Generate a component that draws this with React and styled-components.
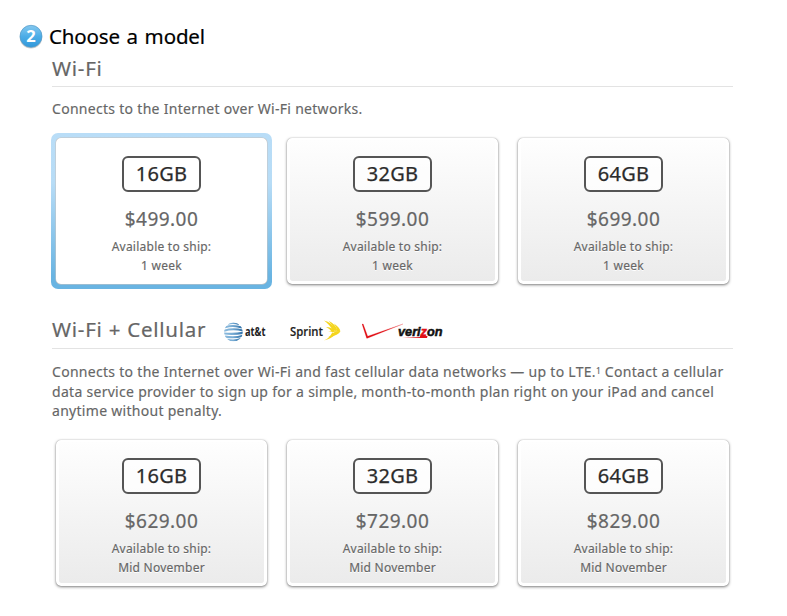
import React from 'react';
import styled, { createGlobalStyle } from 'styled-components';

const GlobalStyle = createGlobalStyle`
  * { box-sizing: border-box; }
  body { margin: 0; background: #fff; font-family: "Noto Sans", "Open Sans", sans-serif; color: #666; }
`;

const Page = styled.main`
  width: 787px;
  height: 616px;
  padding: 22px 0 0 19px;
  overflow: hidden;
`;

const StepHeader = styled.header`
  display: flex;
  align-items: center;
  gap: 6px;
  height: 28px;
`;

const StepTitle = styled.h1`
  margin: 0;
  font-size: 20.5px;
  font-weight: 400;
  line-height: 27px;
  letter-spacing: -0.15px;
  word-spacing: 1.5px;
  color: #000;
  -webkit-text-stroke: 0.2px #000;
`;

const StepBadge = styled.span`
  width: 24px;
  height: 24px;
  display: flex;
  svg { display: block; }
`;

const Section = styled.section`
  width: 681px;
  margin: ${(p) => p.$top}px 0 0 33px;
`;

const SectionHeader = styled.div`
  display: flex;
  height: 33px;
  border-bottom: 1px solid #e3e3e3;
`;

const SectionTitle = styled.h2`
  margin: 0;
  font-size: 20.5px;
  font-weight: 400;
  line-height: ${(p) => p.$line}px;
  letter-spacing: 0.75px;
  white-space: nowrap;
  -webkit-text-stroke: 0.2px #666;
`;

const Carriers = styled.div`
  display: flex;
  align-items: flex-start;
  padding: 4px 0 0 18px;
  svg { display: block; }
`;

const Description = styled.p`
  margin: ${(p) => p.$top}px 0 0;
  height: ${(p) => p.$lines * 19.5}px;
  font-size: 14px;
  line-height: 19.5px;
  letter-spacing: 0.29px;
  white-space: nowrap;
  -webkit-text-stroke: 0.15px #666;
`;

const Footnote = styled.span`
  display: inline-block;
  width: 5px;
  font-size: 8.5px;
  line-height: 1;
  vertical-align: 3px;
`;

const Options = styled.div`
  display: flex;
  gap: 20px;
  margin: 19.5px 0 0 4px;
`;

const Card = styled.button`
  display: flex;
  flex-direction: column;
  align-items: center;
  width: 211px;
  height: 146px;
  padding: 15px 0 0;
  border: 3px solid #fff;
  border-top-width: 2px;
  border-radius: 5px;
  font: inherit;
  color: inherit;
  background: linear-gradient(#fefefe, #ebebeb) padding-box, #fff border-box;
  box-shadow: 0 0 1px 0 rgba(0, 0, 0, 0.3), 0 1px 3px rgba(0, 0, 0, 0.5);
`;

const SelectedFrame = styled.div`
  display: flex;
  margin: -5px;
  padding: 5px;
  border-radius: 7px;
  background: linear-gradient(#b9ddf7 0%, #b7dcf6 32%, #69b4e2 92%);
  ${Card} {
    background: #fff;
    box-shadow: 0 0 1px 0 #b5b5b5, 0 0 0 0.5px #c8c8c8;
  }
`;

const Capacity = styled.span`
  display: flex;
  align-items: center;
  justify-content: center;
  width: 79px;
  height: 36px;
  margin-top: 1px;
  padding-bottom: 1px;
  border: 2px solid #555;
  border-radius: 6px;
  background: ${(p) => (p.$plain ? '#fff' : 'rgba(255,255,255,.65)')};
  font-size: 20px;
  line-height: 28px;
  letter-spacing: 0.3px;
  color: #2b2b2b;
  -webkit-text-stroke: 0.25px #2b2b2b;
`;

const Price = styled.span`
  margin-top: 15px;
  font-size: 19px;
  line-height: 24px;
  letter-spacing: 0.45px;
  -webkit-text-stroke: 0.2px #666;
`;

const Shipping = styled.span`
  margin-top: 6px;
  font-size: 12px;
  line-height: 19px;
  letter-spacing: 0.24px;
  text-align: center;
  text-shadow: 0 1px 0 #fff;
  -webkit-text-stroke: 0.15px #666;
`;

function StepNumber() {
  return (
    <StepBadge>
      <svg width="24" height="25" viewBox="0 0 24 25">
        <defs>
          <linearGradient id="step" x1="0" y1="0" x2="0" y2="1">
            <stop offset="0" stopColor="#85c8ef" />
            <stop offset=".5" stopColor="#4cade7" />
            <stop offset="1" stopColor="#3298da" />
          </linearGradient>
        </defs>
        <circle cx="12" cy="13.4" r="11.2" fill="#000" opacity=".2" />
        <circle cx="12" cy="12.3" r="11" fill="url(#step)" stroke="#5299c7" strokeWidth=".7" />
        <text x="12" y="18.2" textAnchor="middle" fontFamily="Noto Sans" fontSize="16.5" fontWeight="700" fill="#fff">2</text>
      </svg>
    </StepBadge>
  );
}

function AttLogo() {
  return (
    <svg width="66" height="24" viewBox="0 0 66 24">
      <defs>
        <clipPath id="globe"><circle cx="9.4" cy="12" r="9.4" /></clipPath>
        <linearGradient id="globeStripe">
          <stop offset="0" stopColor="#8ab9dc" />
          <stop offset=".45" stopColor="#78acd4" />
          <stop offset="1" stopColor="#2a6da6" />
        </linearGradient>
      </defs>
      <g clipPath="url(#globe)" fill="none" stroke="url(#globeStripe)">
        <path d="M4 3.9Q9 2.3 15 4.1" strokeWidth="1.8" />
        <path d="M1 7.3Q9 4.5 18 7.5" strokeWidth="1.9" />
        <path d="M0 10.7Q9 7.9 19 10.5" strokeWidth="2" />
        <path d="M0 13.5Q10 14.5 19 12.9" strokeWidth="2.1" />
        <path d="M1 16.5Q10 18.5 19 15.8" strokeWidth="2" />
        <path d="M3 19.5Q10 21.5 17 18.9" strokeWidth="1.8" />
      </g>
      <text x="21" y="16.3" textLength="20.5" lengthAdjust="spacingAndGlyphs" fontFamily="Open Sans" fontWeight="700" fontSize="11.5" fill="#222">at&amp;t</text>
    </svg>
  );
}

function SprintLogo() {
  return (
    <svg width="72" height="24" viewBox="0 0 72 24">
      <text x="0" y="16.2" textLength="33" lengthAdjust="spacingAndGlyphs" fontFamily="Open Sans" fontWeight="600" fontSize="13" fill="#222" stroke="#222" strokeWidth=".15">Sprint</text>
      <g fill="#f4d51d">
        <path d="M34 .5Q42 2 45.5 10L43.5 11Q39 4 34 .5Z" />
        <path d="M38.5 .8Q46 4.5 47.2 10.5L45 11Q43 5 38.5 .8Z" />
        <path d="M44 3.5Q49.5 7.5 50.3 10.8L46.6 11.5Q47 7.5 44 3.5Z" />
        <path d="M36 7Q42 7 45 11L42.5 12.5Q40.5 9 36 7Z" />
        <path d="M38 11.5L50.5 11Q49 15.5 38 17.3Q43 15 44.5 12.5Z" />
        <path d="M34 20.5Q39 18.5 42 13L46 13Q42.5 18.5 34 20.5Z" />
      </g>
    </svg>
  );
}

function VerizonLogo() {
  return (
    <svg width="84" height="24" viewBox="0 0 84 24">
      <defs>
        <linearGradient id="check"><stop offset="0" stopColor="#e10f16" /><stop offset=".55" stopColor="#e10f16" /><stop offset="1" stopColor="#f07a7c" /></linearGradient>
        <linearGradient id="swash"><stop offset="0" stopColor="#fff" /><stop offset="1" stopColor="#e10f16" /></linearGradient>
      </defs>
      <path d="M0 4H1.2L5.7 16.2L41 4L5.4 18.2H4.6Z" fill="url(#check)" stroke="#e10f16" strokeWidth=".2" />
      <path d="M40 17H59V18H40Z" fill="url(#swash)" />
      <text x="36" y="16.3" textLength="44.5" lengthAdjust="spacingAndGlyphs" fontFamily="Liberation Sans" fontWeight="700" fontStyle="italic" fontSize="12.5" fill="#111" stroke="#111" strokeWidth=".5">
        veri<tspan fill="#e10f16" stroke="#e10f16">z</tspan>on
      </text>
      <path d="M58 16H65.5L65 18.1H57.5Z" fill="#e10f16" />
    </svg>
  );
}

function Option({ size, price, ship, selected }) {
  const card = (
    <Card>
      <Capacity $plain={selected}>{size}</Capacity>
      <Price>{price}</Price>
      <Shipping>Available to ship:<br />{ship}</Shipping>
    </Card>
  );
  return selected ? <SelectedFrame>{card}</SelectedFrame> : card;
}

export default function App() {
  return (
    <>
      <GlobalStyle />
      <Page>
        <StepHeader>
          <StepNumber />
          <StepTitle>Choose a model</StepTitle>
        </StepHeader>
        <Section $top={4}>
          <SectionHeader><SectionTitle $line={29}>Wi-Fi</SectionTitle></SectionHeader>
          <Description $top={12} $lines={1}>Connects to the Internet over Wi-Fi networks.</Description>
          <Options>
            <Option size="16GB" price="$499.00" ship="1 week" selected />
            <Option size="32GB" price="$599.00" ship="1 week" />
            <Option size="64GB" price="$699.00" ship="1 week" />
          </Options>
        </Section>
        <Section $top={32}>
          <SectionHeader>
            <SectionTitle $line={27}>Wi-Fi + Cellular</SectionTitle>
            <Carriers>
              <AttLogo />
              <SprintLogo />
              <VerizonLogo />
            </Carriers>
          </SectionHeader>
          <Description $top={13} $lines={3}>
            Connects to the Internet over Wi-Fi and fast cellular data networks — up to LTE.<Footnote>1</Footnote> Contact a cellular<br />
            data service provider to sign up for a simple, month-to-month plan right on your iPad and cancel<br />
            anytime without penalty.
          </Description>
          <Options>
            <Option size="16GB" price="$629.00" ship="Mid November" />
            <Option size="32GB" price="$729.00" ship="Mid November" />
            <Option size="64GB" price="$829.00" ship="Mid November" />
          </Options>
        </Section>
      </Page>
    </>
  );
}
